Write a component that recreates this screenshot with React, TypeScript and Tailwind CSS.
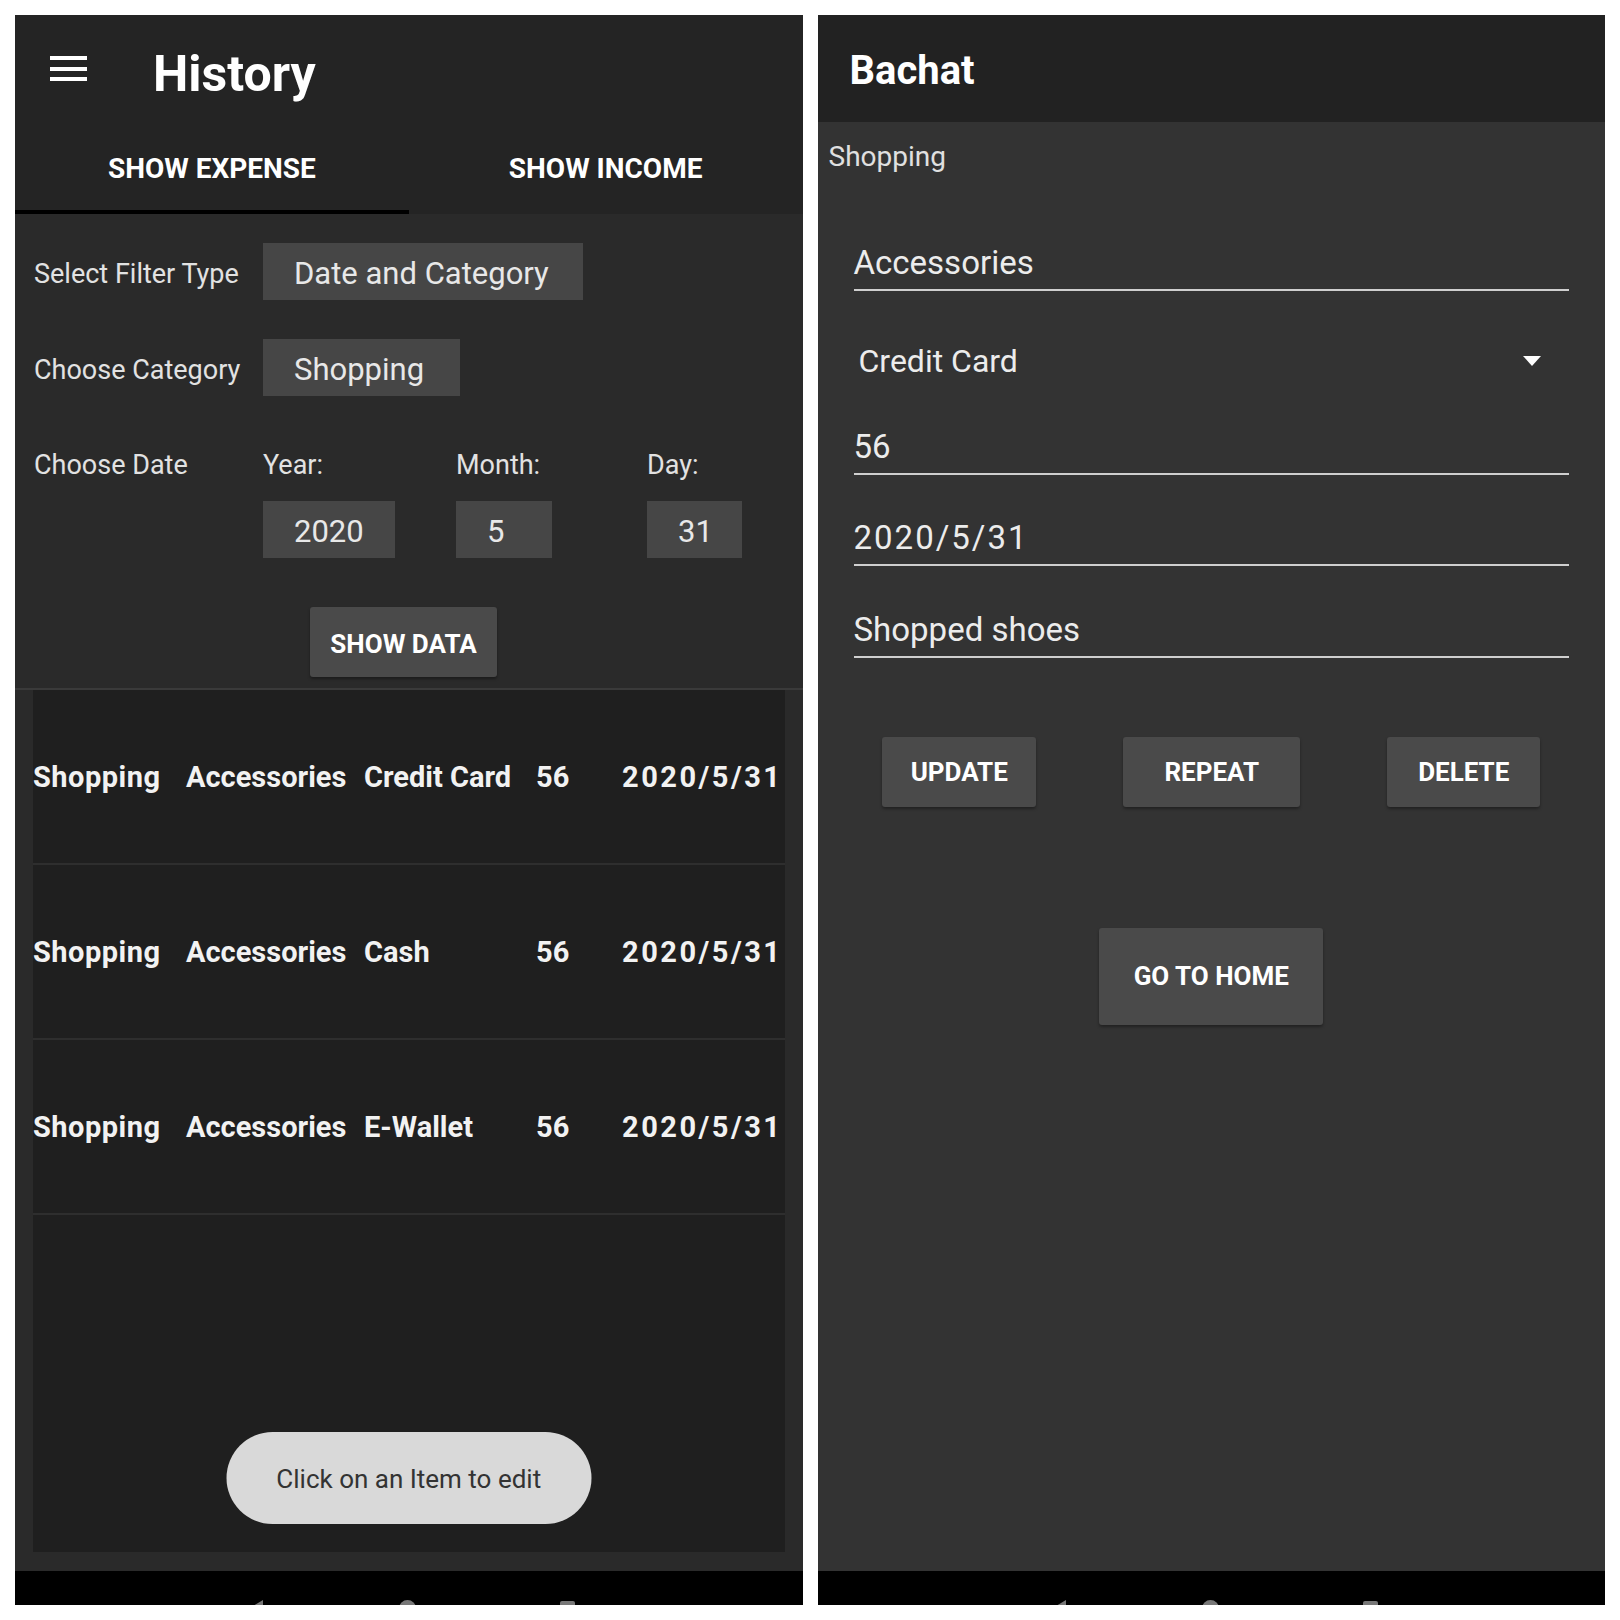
const rows = [
  { cat: 'Shopping', sub: 'Accessories', pay: 'Credit Card', amt: '56', date: '2020/5/31' },
  { cat: 'Shopping', sub: 'Accessories', pay: 'Cash', amt: '56', date: '2020/5/31' },
  { cat: 'Shopping', sub: 'Accessories', pay: 'E-Wallet', amt: '56', date: '2020/5/31' },
]

const font = { fontFamily: 'Roboto, "Open Sans", sans-serif' }

function NavBar() {
  return (
    <div className="relative h-[34px] overflow-hidden bg-black">
      <div className="absolute left-[233px] top-[29px] h-0 w-0 border-y-[9px] border-r-[15px] border-y-transparent border-r-[#777]" />
      <div className="absolute left-[384px] top-[29px] h-[17px] w-[17px] rounded-full bg-[#777]" />
      <div className="absolute left-[545px] top-[30px] h-[15px] w-[15px] rounded-[2px] bg-[#777]" />
    </div>
  )
}

function Box({ children, w }: { children: React.ReactNode; w: string }) {
  return (
    <div className={`flex h-[57px] items-center bg-[#464646] pl-[31px] pt-[5px] text-[31px] text-[#e8e8e8] ${w}`}>
      {children}
    </div>
  )
}

function HistoryPanel() {
  return (
    <div className="flex flex-1 flex-col bg-[#2a2a2a]">
      <header className="bg-[#242424]">
        <div className="flex h-[107px] items-center">
          <div className="ml-[35px] flex flex-col gap-[6.5px]">
            <span className="block h-[4px] w-[37px] bg-white" />
            <span className="block h-[4px] w-[37px] bg-white" />
            <span className="block h-[4px] w-[37px] bg-white" />
          </div>
          <h1 className="ml-[66px] mt-[12px] text-[50px] font-bold text-white">History</h1>
        </div>
        <div className="flex h-[92px]">
          <div className="flex flex-1 flex-col">
            <div className="flex flex-1 items-center justify-center pt-[6px] text-[28px] font-bold text-white">SHOW EXPENSE</div>
            <div className="h-[4px] bg-black" />
          </div>
          <div className="flex flex-1 items-center justify-center pb-[4px] pt-[6px] text-[28px] font-bold text-white">SHOW INCOME</div>
        </div>
      </header>

      <section className="flex flex-col pl-[19px] pt-[29px] text-[27px] text-[#e2e2e2]">
        <div className="flex items-center">
          <span className="w-[229px] pt-[6px]">Select Filter Type</span>
          <Box w="w-[320px]">Date and Category</Box>
        </div>
        <div className="mt-[39px] flex items-center">
          <span className="w-[229px] pt-[6px]">Choose Category</span>
          <Box w="w-[197px]">Shopping</Box>
        </div>
        <div className="mt-[50px] grid grid-cols-[229px_193px_191px_1fr] gap-y-[20px] leading-[32px]">
          <span className="pt-[3px]">Choose Date</span>
          <span className="pt-[3px]">Year:</span>
          <span className="pt-[3px]">Month:</span>
          <span className="pt-[3px]">Day:</span>
          <span />
          <Box w="w-[132px]">2020</Box>
          <Box w="w-[96px]">5</Box>
          <Box w="w-[95px]">31</Box>
        </div>
        <button className="ml-[276px] mt-[49px] h-[70px] w-[187px] rounded-[3px] bg-[#4a4a4a] pt-[4px] text-[26px] font-bold text-white shadow-[0_2px_3px_rgba(0,0,0,0.35)]">
          SHOW DATA
        </button>
      </section>

      <div className="mt-[11px] h-[2px] bg-[#3a3a3a]" />

      <div className="relative mx-[18px] mb-[19px] flex-1 bg-[#1f1f1f]">
        {rows.map((r, i) => (
          <div
            key={i}
            className="grid h-[175px] grid-cols-[153px_178px_172px_86px_1fr] items-center border-b-2 border-[#2e2e2e] pt-[3px] text-[29px] font-bold text-[#f2f2f2]"
          >
            <span className="tracking-[0.5px]">{r.cat}</span>
            <span>{r.sub}</span>
            <span>{r.pay}</span>
            <span>{r.amt}</span>
            <span className="tracking-[2.5px]">{r.date}</span>
          </div>
        ))}
        <div className="absolute bottom-[28px] left-1/2 flex h-[92px] w-[365px] -translate-x-1/2 items-center justify-center rounded-full bg-[#d9d9d9] pt-[2px] text-[26px] text-[#333]">
          Click on an Item to edit
        </div>
      </div>

      <NavBar />
    </div>
  )
}

function Field({ children, className = '' }: { children: React.ReactNode; className?: string }) {
  return (
    <div className={`border-b-2 border-[#cfcfcf] pb-[6px] text-[33px] leading-[40px] text-[#ececec] ${className}`}>
      {children}
    </div>
  )
}

function EditPanel() {
  const btn =
    'h-[70px] rounded-[3px] bg-[#4a4a4a] text-[26px] font-bold text-white shadow-[0_2px_3px_rgba(0,0,0,0.35)]'
  return (
    <div className="flex flex-1 flex-col bg-[#333333]">
      <header className="flex h-[107px] items-center bg-[#222222] pl-[32px]">
        <h1 className="mt-[4px] text-[40px] font-bold text-white">Bachat</h1>
      </header>

      <div className="flex flex-1 flex-col">
        <p className="mt-[19px] pl-[11px] text-[28px] leading-[32px] text-[#e0e0e0]">Shopping</p>

        <div className="mx-[36px] flex flex-col">
          <Field className="mt-[70px]">Accessories</Field>
          <div className="mt-[50px] flex h-[40px] items-center justify-between pl-[5px] pr-[28px] text-[32px] text-[#ececec]">
            <span>Credit Card</span>
            <span className="h-0 w-0 border-x-[9px] border-t-[10px] border-x-transparent border-t-white" />
          </div>
          <Field className="mt-[46px]">56</Field>
          <Field className="mt-[43px] tracking-[2px]">2020/5/31</Field>
          <Field className="mt-[44px]">Shopped shoes</Field>
        </div>

        <div className="mt-[79px] flex justify-center gap-[87px]">
          <button className={`${btn} w-[154px]`}>UPDATE</button>
          <button className={`${btn} w-[177px]`}>REPEAT</button>
          <button className={`${btn} w-[153px]`}>DELETE</button>
        </div>

        <button className={`${btn} mx-auto mt-[121px] h-[97px] w-[224px]`}>GO TO HOME</button>
      </div>

      <NavBar />
    </div>
  )
}

export default function App() {
  return (
    <div className="flex h-[1620px] w-[1620px] gap-[15px] bg-white p-[15px]" style={font}>
      <HistoryPanel />
      <EditPanel />
    </div>
  )
}
